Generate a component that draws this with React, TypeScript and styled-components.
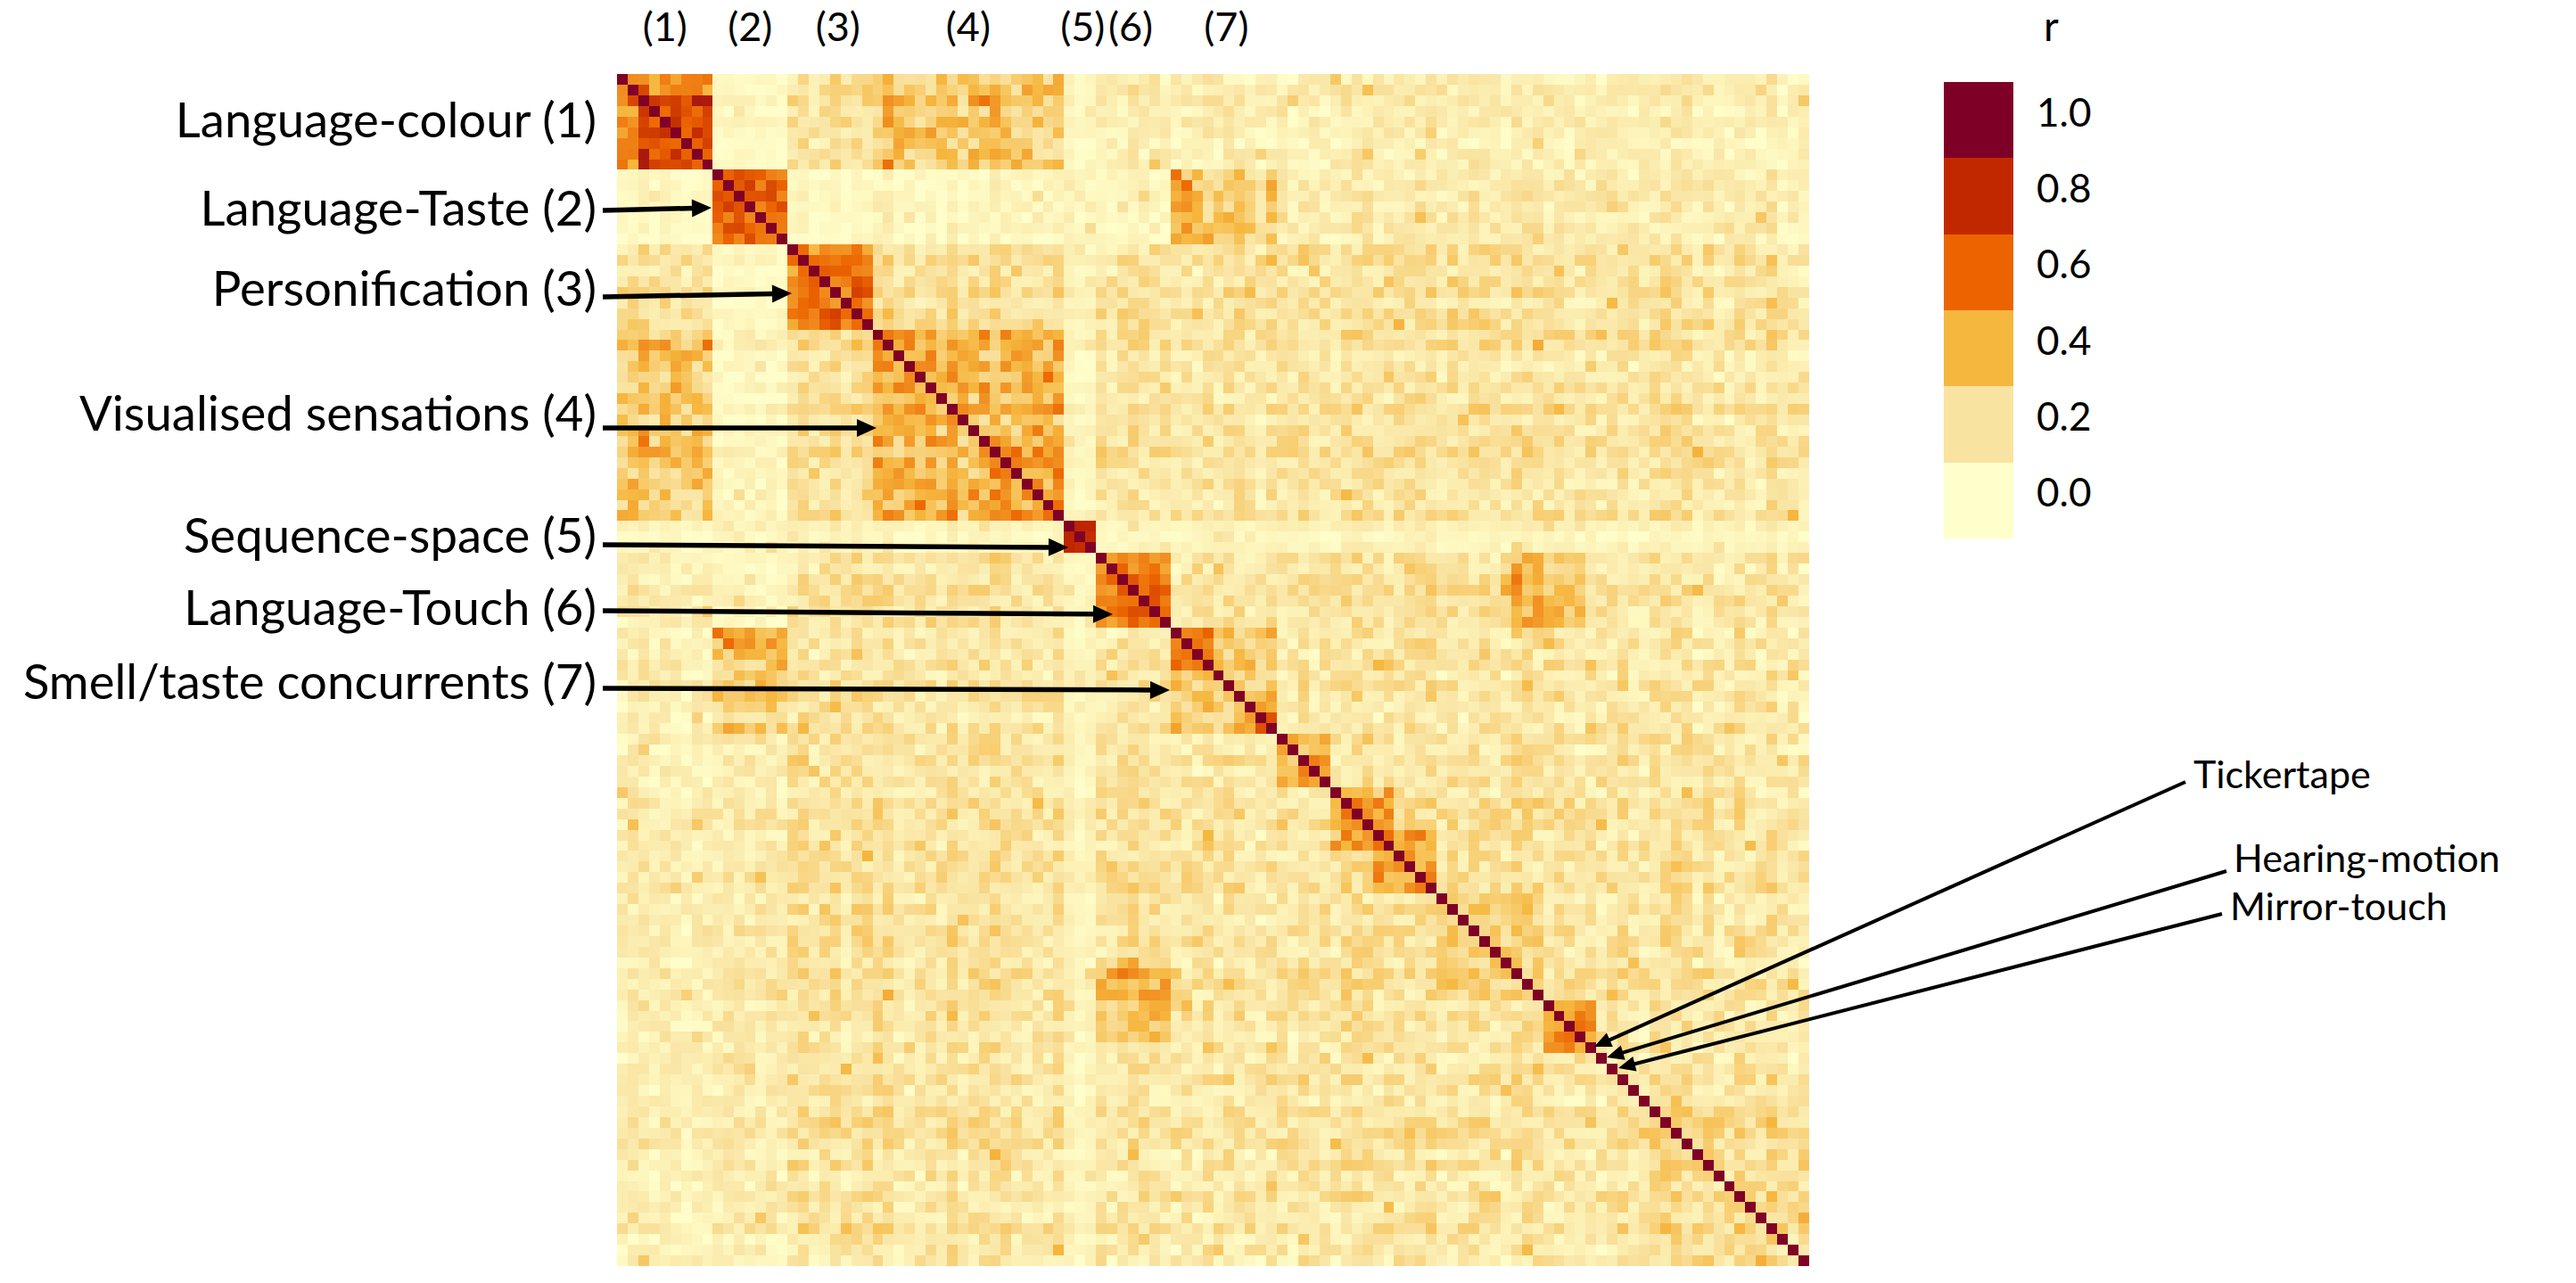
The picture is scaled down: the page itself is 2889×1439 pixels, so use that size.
import { useMemo } from 'react';
import styled, { createGlobalStyle } from 'styled-components';

const N = 112;
const MAP_SIZE = 1337;

// colour stops of the r scale (YlOrRd)
const STOPS: [number, [number, number, number]][] = [
	[0.0, [255, 255, 204]],
	[0.2, [249, 227, 161]],
	[0.4, [246, 183, 63]],
	[0.6, [236, 100, 0]],
	[0.8, [194, 40, 0]],
	[1.0, [128, 0, 38]],
];

const LEGEND = [
	{ label: '1.0', color: '#7f0026' },
	{ label: '0.8', color: '#c22800' },
	{ label: '0.6', color: '#ec6400' },
	{ label: '0.4', color: '#f6b73f' },
	{ label: '0.2', color: '#f9e3a1' },
	{ label: '0.0', color: '#ffffcc' },
];

// [row from, row to, col from, col to, mean r, spread]
type Patch = [number, number, number, number, number, number];

const PATCHES: Patch[] = [
	// off-diagonal structure
	[0, 8, 9, 15, 0.06, 0.05],
	[0, 8, 16, 23, 0.2, 0.14],
	[0, 8, 24, 41, 0.32, 0.18],
	[0, 8, 42, 44, 0.05, 0.04],
	[0, 8, 45, 111, 0.12, 0.12],
	[9, 15, 16, 23, 0.06, 0.05],
	[9, 15, 24, 51, 0.08, 0.08],
	[9, 15, 52, 61, 0.3, 0.16],
	[9, 15, 52, 54, 0.38, 0.16],
	[9, 15, 62, 111, 0.15, 0.12],
	[16, 23, 24, 41, 0.2, 0.12],
	[16, 23, 42, 44, 0.07, 0.05],
	[16, 23, 45, 111, 0.19, 0.14],
	[24, 41, 42, 44, 0.06, 0.05],
	[24, 41, 45, 111, 0.18, 0.14],
	[42, 44, 45, 111, 0.07, 0.06],
	[45, 51, 52, 111, 0.17, 0.14],
	[45, 51, 83, 90, 0.36, 0.16],
	// blocks along the diagonal
	[0, 8, 0, 8, 0.48, 0.14],
	[2, 8, 2, 8, 0.68, 0.12],
	[9, 15, 9, 15, 0.62, 0.14],
	[9, 11, 9, 11, 0.72, 0.1],
	[16, 23, 16, 23, 0.55, 0.15],
	[24, 41, 24, 41, 0.36, 0.2],
	[24, 31, 24, 31, 0.42, 0.2],
	[34, 41, 34, 41, 0.44, 0.2],
	[42, 44, 42, 44, 0.82, 0.08],
	[45, 51, 45, 51, 0.55, 0.15],
	[52, 61, 52, 61, 0.32, 0.18],
	[52, 55, 52, 55, 0.5, 0.15],
	[58, 61, 58, 61, 0.45, 0.15],
	[62, 66, 62, 66, 0.42, 0.18],
	[67, 72, 67, 72, 0.4, 0.18],
	[71, 76, 71, 76, 0.45, 0.18],
	[77, 86, 77, 86, 0.27, 0.15],
	[87, 91, 87, 91, 0.5, 0.15],
	[96, 111, 96, 111, 0.24, 0.15],
];

// centres are in cell units along the heatmap
const GROUP_TAGS = [
	{ text: '(1)', at: 4.45 },
	{ text: '(2)', at: 12.45 },
	{ text: '(3)', at: 20.8 },
	{ text: '(4)', at: 33.1 },
	{ text: '(5)', at: 43.7 },
	{ text: '(6)', at: 48.3 },
	{ text: '(7)', at: 57.2 },
];

const ROW_LABELS = [
	{ text: 'Language-colour (1)', at: 4.35 },
	{ text: 'Language-Taste (2)', at: 12.45 },
	{ text: 'Personification (3)', at: 20 },
	{ text: 'Visualised sensations (4)', at: 31.75 },
	{ text: 'Sequence-space (5)', at: 43.2 },
	{ text: 'Language-Touch (6)', at: 49.9 },
	{ text: 'Smell/taste concurrents (7)', at: 56.95 },
];

const CALLOUTS = [
	{ text: 'Tickertape', indent: 280, gap: 242 },
	{ text: 'Hearing-motion', indent: 325, gap: 51 },
	{ text: 'Mirror-touch', indent: 321, gap: 11 },
];

// [x1, y1, tipX, tipY, stroke]
const ARROWS: [number, number, number, number, number][] = [
	[676, 236, 798, 233, 5.5],
	[676, 333, 888, 329, 5.5],
	[676, 480, 983, 480, 5.5],
	[676, 611, 1198, 614, 5.5],
	[676, 685, 1248, 689, 5.5],
	[676, 772, 1312, 774, 5.5],
	[2451, 877, 1788, 1174, 4],
	[2497, 977, 1802, 1186, 4],
	[2492, 1025, 1815, 1198, 4],
];

const mulberry32 = (seed: number) => () => {
	seed |= 0;
	seed = (seed + 0x6d2b79f5) | 0;
	let t = Math.imul(seed ^ (seed >>> 15), 1 | seed);
	t = (t + Math.imul(t ^ (t >>> 7), 61 | t)) ^ t;
	return ((t ^ (t >>> 14)) >>> 0) / 4294967296;
};

const colorOf = (v: number) => {
	const x = Math.max(0, Math.min(1, v));
	for (let k = 1; k < STOPS.length; k++) {
		const [v1, c1] = STOPS[k];
		const [v0, c0] = STOPS[k - 1];
		if (x <= v1) {
			const f = (x - v0) / (v1 - v0);
			const c = c0.map((a, i) => Math.round(a + (c1[i] - a) * f));
			return `rgb(${c[0]},${c[1]},${c[2]})`;
		}
	}
	return 'rgb(128,0,38)';
};

const buildMatrix = () => {
	const rnd = mulberry32(20231);
	const mean = Array.from({ length: N }, () => Array(N).fill(0.17));
	const spread = Array.from({ length: N }, () => Array(N).fill(0.15));
	PATCHES.forEach(([r0, r1, c0, c1, v, s]) => {
		for (let i = r0; i <= r1; i++)
			for (let j = c0; j <= c1; j++) {
				mean[i][j] = mean[j][i] = v;
				spread[i][j] = spread[j][i] = s;
			}
	});
	const rowEffect = Array.from({ length: N }, () => (rnd() - 0.5) * 0.07);
	const m = Array.from({ length: N }, () => Array(N).fill(1));
	for (let i = 0; i < N; i++)
		for (let j = i + 1; j < N; j++) {
			let v = mean[i][j] + (rnd() - 0.5) * spread[i][j] * 1.6 + rowEffect[i] + rowEffect[j];
			if (rnd() < 0.04) v += 0.12;
			v = Math.max(0.01, Math.min(0.92, v));
			m[i][j] = m[j][i] = v;
		}
	return m;
};

// grid lines (on a half-cell grid) that put the item's centre at `at` cells
const spanAround = (at: number, half = 8) => {
	const k = Math.round(at * 4);
	const a = Math.max(0, Math.floor(k / 2) - half);
	return `${a + 1} / ${k - a + 1}`;
};

const GlobalStyle = createGlobalStyle`
	html, body {
		margin: 0;
		padding: 0;
		background: #ffffff;
	}
	body {
		font-family: Lato, 'Liberation Sans', sans-serif;
		color: #000000;
		overflow: hidden;
	}
`;

const Figure = styled.div`
	position: relative;
	width: 2889px;
	height: 1439px;
	display: grid;
	grid-template-columns: 692px ${MAP_SIZE}px 1fr;
	grid-template-rows: 83px ${MAP_SIZE}px;
`;

const ColumnHeader = styled.div`
	grid-column: 2;
	grid-row: 1;
	display: grid;
	grid-template-columns: repeat(${N * 2}, minmax(0, 1fr));
	align-items: start;
	padding-top: 7px;
`;

const GroupTag = styled.span<{ $span: string }>`
	grid-column: ${(p) => p.$span};
	grid-row: 1;
	justify-self: center;
	font-size: 45px;
	line-height: 1;
	white-space: nowrap;
`;

const RowLabels = styled.div`
	grid-column: 1;
	grid-row: 2;
	display: grid;
	grid-template-rows: repeat(${N * 2}, minmax(0, 1fr));
	padding-right: 23px;
`;

const RowLabel = styled.span<{ $span: string }>`
	grid-row: ${(p) => p.$span};
	grid-column: 1;
	justify-self: end;
	align-self: center;
	font-size: 54.5px;
	line-height: 1;
	white-space: nowrap;
`;

const MapSvg = styled.svg`
	grid-column: 2;
	grid-row: 2;
	display: block;
	width: ${MAP_SIZE}px;
	height: ${MAP_SIZE}px;
`;

const RightPanel = styled.div`
	grid-column: 3;
	grid-row: 1 / span 2;
	display: flex;
	flex-direction: column;
	padding-left: 151px;
`;

const LegendTitle = styled.div`
	height: 92px;
	box-sizing: border-box;
	padding: 6px 0 0 112px;
	font-size: 46px;
	line-height: 1;
`;

const LegendRow = styled.div`
	display: flex;
	align-items: center;
	height: 85.33px;
`;

const Swatch = styled.div<{ $color: string }>`
	width: 78px;
	height: 100%;
	background: ${(p) => p.$color};
`;

const LegendValue = styled.span`
	margin: 0 0 20px 26px;
	font-size: 44px;
	line-height: 1;
`;

const Callout = styled.div<{ $indent: number; $gap: number }>`
	margin: ${(p) => p.$gap}px 0 0 ${(p) => p.$indent}px;
	font-size: 43px;
	line-height: 1;
	white-space: nowrap;
`;

const ArrowLayer = styled.svg`
	position: absolute;
	left: 0;
	top: 0;
	width: 2889px;
	height: 1439px;
	pointer-events: none;
`;

const Arrow = ({ x1, y1, x2, y2, w }: { x1: number; y1: number; x2: number; y2: number; w: number }) => {
	const len = Math.hypot(x2 - x1, y2 - y1);
	const ux = (x2 - x1) / len;
	const uy = (y2 - y1) / len;
	const head = w > 5 ? 22 : 19;
	const half = w > 5 ? 10 : 8.5;
	const bx = x2 - ux * head;
	const by = y2 - uy * head;
	const pts = `${x2},${y2} ${bx - uy * half},${by + ux * half} ${bx + uy * half},${by - ux * half}`;
	return (
		<g>
			<line x1={x1} y1={y1} x2={bx + ux * 2} y2={by + uy * 2} stroke="#000" strokeWidth={w} />
			<polygon points={pts} fill="#000" />
		</g>
	);
};

const Heatmap = () => {
	const matrix = useMemo(buildMatrix, []);
	return (
		<MapSvg viewBox={`0 0 ${N} ${N}`} preserveAspectRatio="none" shapeRendering="crispEdges">
			{matrix.map((row, i) =>
				row.map((v, j) => <rect key={`${i}-${j}`} x={j} y={i} width={1} height={1} fill={colorOf(v)} />),
			)}
		</MapSvg>
	);
};

const App = () => {
	return (
		<>
			<GlobalStyle />
			<Figure>
				<ColumnHeader>
					{GROUP_TAGS.map((g) => (
						<GroupTag key={g.text} $span={spanAround(g.at)}>
							{g.text}
						</GroupTag>
					))}
				</ColumnHeader>
				<RowLabels>
					{ROW_LABELS.map((l) => (
						<RowLabel key={l.text} $span={spanAround(l.at)}>
							{l.text}
						</RowLabel>
					))}
				</RowLabels>
				<Heatmap />
				<RightPanel>
					<LegendTitle>r</LegendTitle>
					{LEGEND.map((s) => (
						<LegendRow key={s.label}>
							<Swatch $color={s.color} />
							<LegendValue>{s.label}</LegendValue>
						</LegendRow>
					))}
					{CALLOUTS.map((c) => (
						<Callout key={c.text} $indent={c.indent} $gap={c.gap}>
							{c.text}
						</Callout>
					))}
				</RightPanel>
				<ArrowLayer viewBox="0 0 2889 1439">
					{ARROWS.map(([x1, y1, x2, y2, w], k) => (
						<Arrow key={k} x1={x1} y1={y1} x2={x2} y2={y2} w={w} />
					))}
				</ArrowLayer>
			</Figure>
		</>
	);
};

export default App;
